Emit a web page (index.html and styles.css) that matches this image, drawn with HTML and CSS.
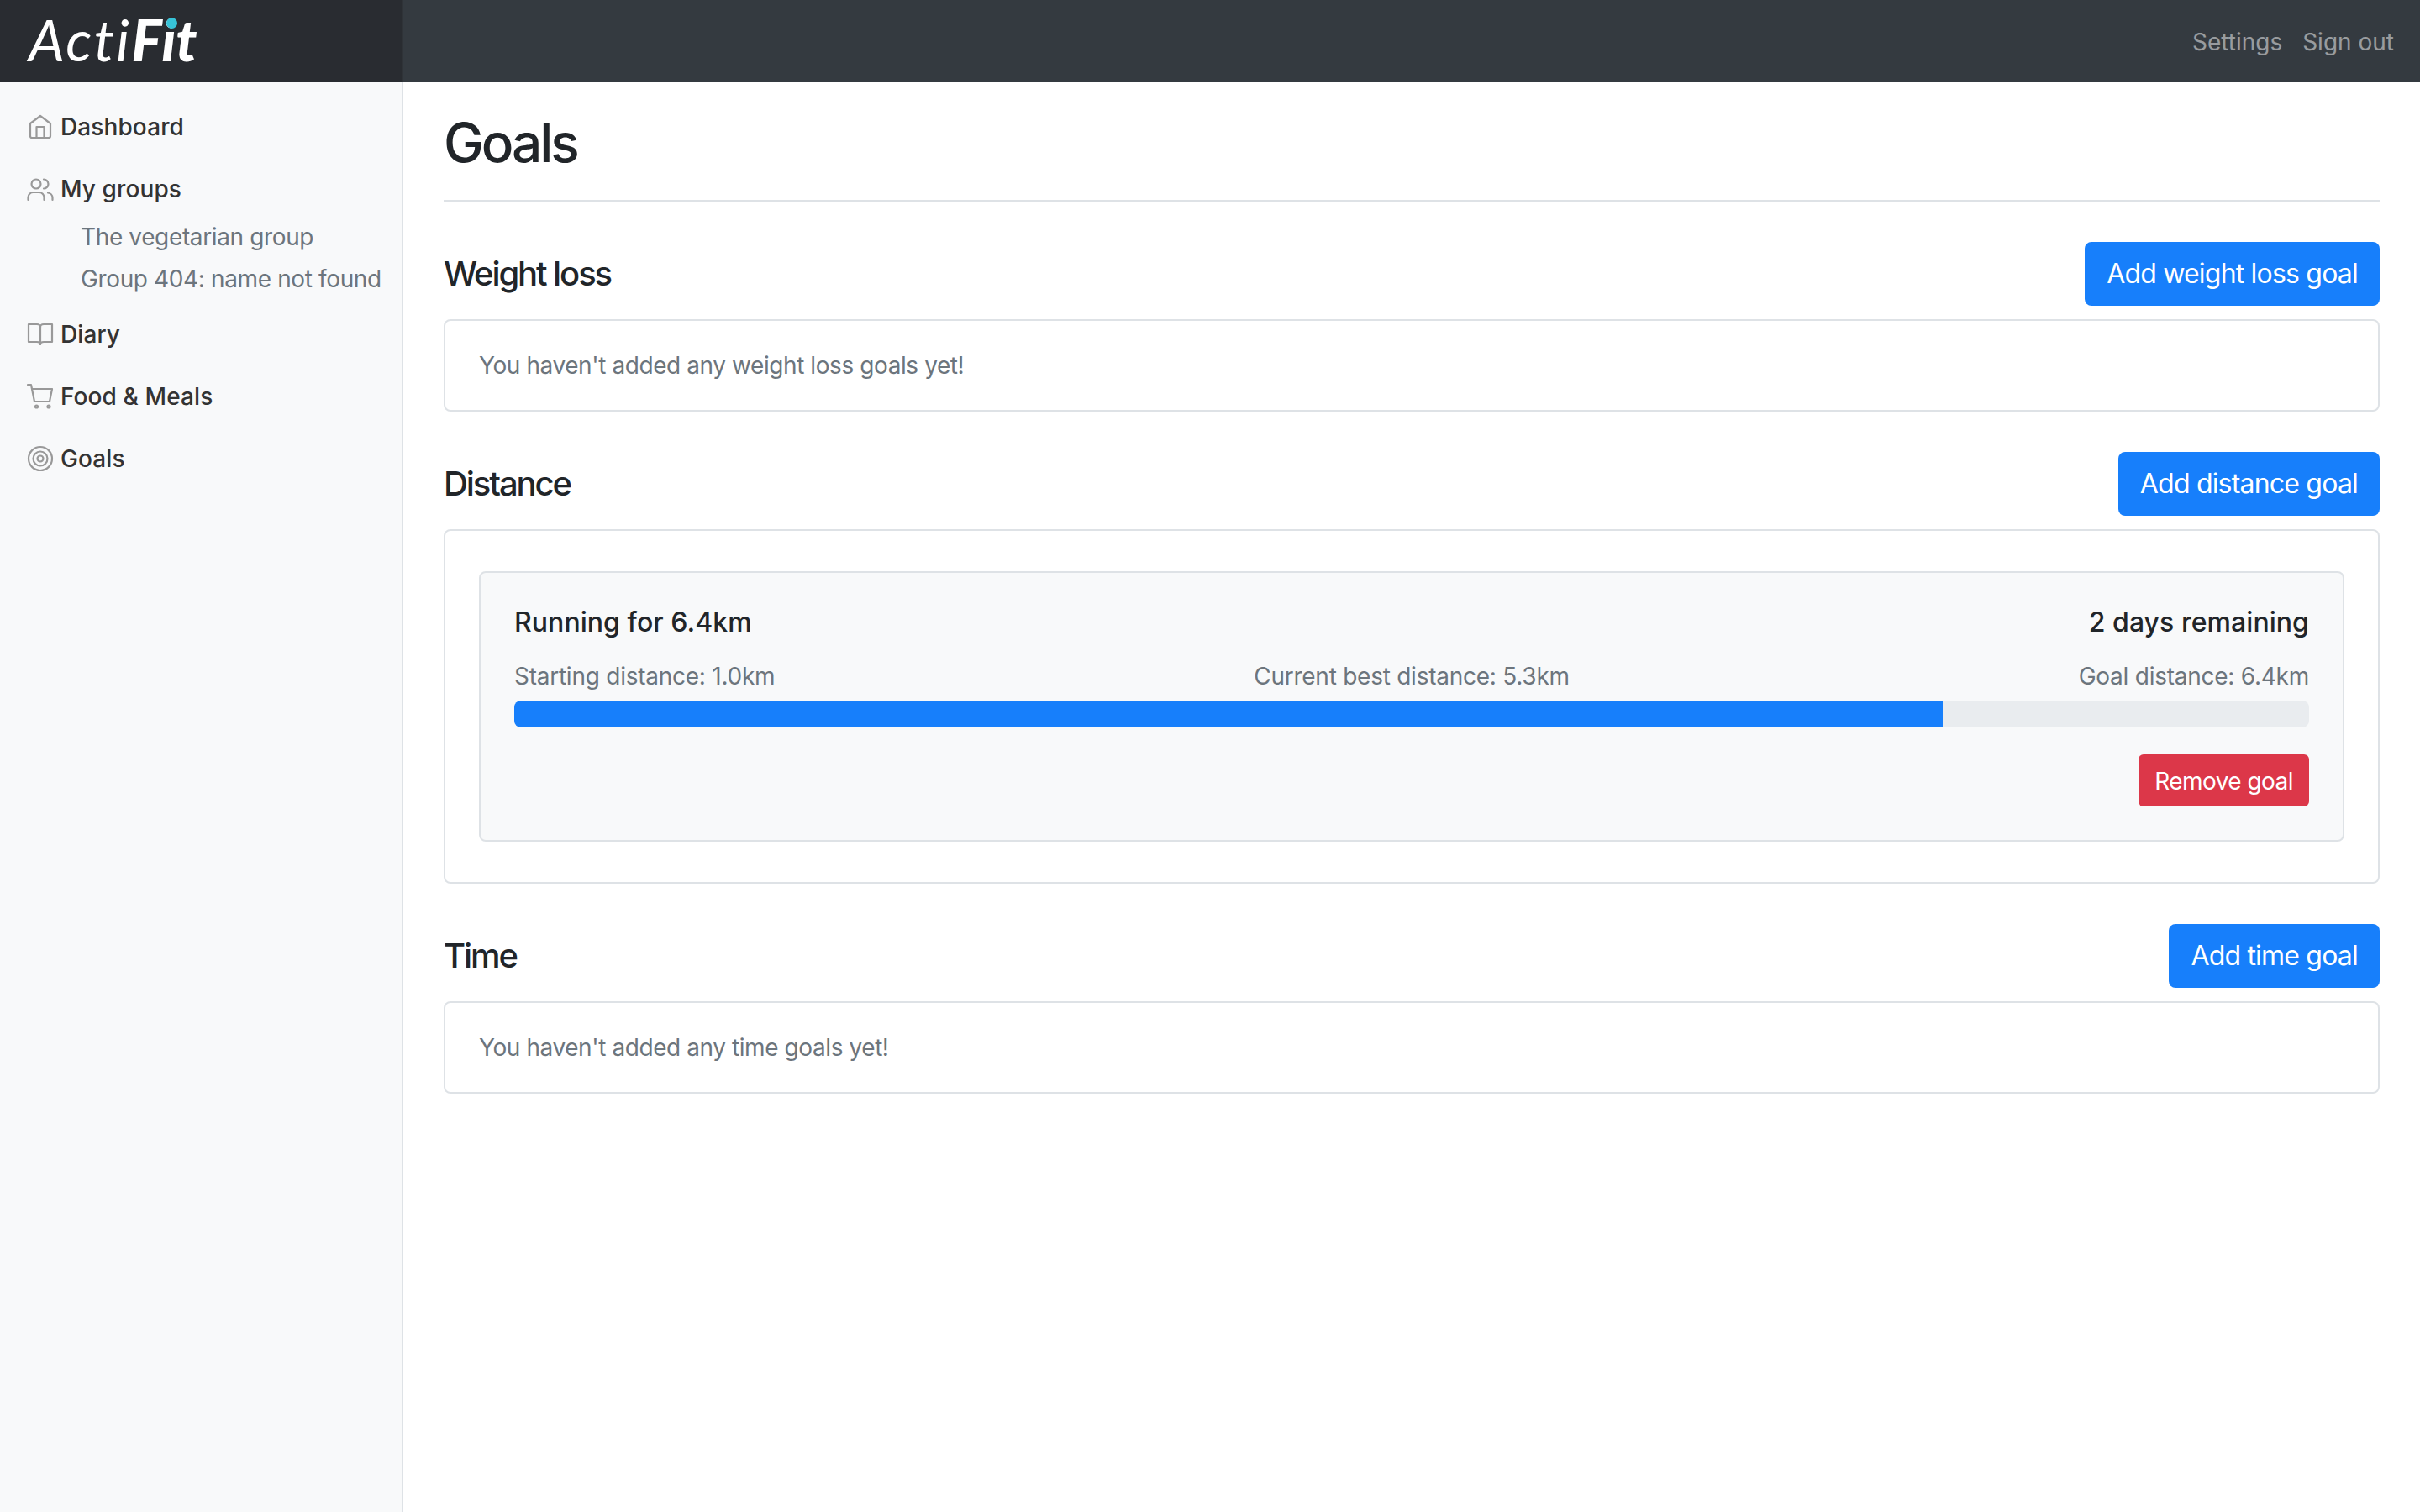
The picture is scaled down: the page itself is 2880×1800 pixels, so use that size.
FILE: index.html
```html
<!DOCTYPE html>
<html lang="en">
<head>
  <meta charset="UTF-8" />
  <title>ActiFit - Goals</title>
  <link rel="stylesheet" href="styles.css">
</head>
<body>
  <header class="topbar">
    <a class="brand" href="#">Acti<b>F<span class="brand-i">i</span>t</b></a>
    <nav class="topnav">
      <a href="#">Settings</a>
      <a href="#">Sign out</a>
    </nav>
  </header>

  <div class="layout">
    <aside class="sidebar">
      <a class="side-link" href="#">
        <svg class="icon" viewBox="0 0 32 32"><path d="M4 12 16 3l12 9v15a2 2 0 0 1-2 2H6a2 2 0 0 1-2-2z"/><path d="M11.5 29V16h9v13"/></svg>
        Dashboard
      </a>
      <a class="side-link" href="#">
        <svg class="icon" viewBox="0 0 32 32"><circle cx="11" cy="10" r="5.5"/><path d="M1.5 29v-3a6 6 0 0 1 6-6h7a6 6 0 0 1 6 6v3"/><path d="M20 4.5a5.5 5.5 0 0 1 0 11"/><path d="M25 20.5a6 6 0 0 1 5.5 6V29"/></svg>
        My groups
      </a>
      <div class="side-sub">
        <a href="#">The vegetarian group</a>
        <a href="#">Group 404: name not found</a>
      </div>
      <a class="side-link" href="#">
        <svg class="icon" viewBox="0 0 32 32"><path d="M2 4h10c2.500 0 4 1.500 4 3.500C16 5.500 17.500 4 20 4h10v21H20c-2 0-4 1-4 3 0-2-2-3-4-3H2z"/><path d="M16 7.500V28"/></svg>
        Diary
      </a>
      <a class="side-link" href="#">
        <svg class="icon" viewBox="0 0 32 32"><path d="M1 2h4l4 20h18l3-15H6"/><circle cx="11.500" cy="28" r="1.500"/><circle cx="26" cy="28" r="1.500"/></svg>
        Food &amp; Meals
      </a>
      <a class="side-link" href="#">
        <svg class="icon" viewBox="0 0 32 32"><circle cx="16" cy="16" r="14"/><circle cx="16" cy="16" r="8.500"/><circle cx="16" cy="16" r="3.500"/></svg>
        Goals
      </a>
    </aside>

    <main class="content">
      <h1 class="page-title">Goals</h1>

      <section class="goal-section">
        <div class="section-head">
          <h2>Weight loss</h2>
          <button class="btn btn-add">Add weight loss goal</button>
        </div>
        <div class="goal-box">
          <p class="empty">You haven't added any weight loss goals yet!</p>
        </div>
      </section>

      <section class="goal-section">
        <div class="section-head">
          <h2>Distance</h2>
          <button class="btn btn-add">Add distance goal</button>
        </div>
        <div class="goal-box goal-box-full">
          <div class="goal-card">
            <div class="goal-top">
              <span>Running for 6.4km</span>
              <span>2 days remaining</span>
            </div>
            <div class="goal-labels">
              <span>Starting distance: 1.0km</span>
              <span>Current best distance: 5.3km</span>
              <span class="label-end">Goal distance: 6.4km</span>
            </div>
            <div class="progress"><div class="progress-bar" style="width: 79.6%"></div></div>
            <div class="goal-actions">
              <button class="btn btn-remove">Remove goal</button>
            </div>
          </div>
        </div>
      </section>

      <section class="goal-section">
        <div class="section-head">
          <h2>Time</h2>
          <button class="btn btn-add">Add time goal</button>
        </div>
        <div class="goal-box">
          <p class="empty">You haven't added any time goals yet!</p>
        </div>
      </section>
    </main>
  </div>
</body>
</html>
```

FILE: styles.css
```css
* { box-sizing: border-box; }
body { margin: 0; height: 100vh; display: flex; flex-direction: column; font-family: Inter, "Liberation Sans", sans-serif; font-size: 32px; line-height: 1.5; color: #212529; background: #fff; }
a { text-decoration: none; color: inherit; }

.topbar { display: flex; align-items: center; justify-content: space-between; height: 98px; background: #343a40; flex: none; }
.brand { display: block; width: 480px; height: 98px; padding-left: 34px; background: #292c31; border-right: 2px solid #2f3338; color: #fff; font-family: Lato, sans-serif; font-style: italic; font-weight: 400; font-size: 68px; line-height: 94px; letter-spacing: 2.5px; }
.brand b { font-weight: 900; letter-spacing: 0; }
.brand-i { position: relative; }
.brand-i::after { content: ""; position: absolute; left: 6px; top: 15px; width: 13px; height: 13px; border-radius: 50%; background: #37c3d8; }
.topnav { display: flex; gap: 24px; padding: 1px 31px 0 0; font-size: 28px; color: rgba(255, 255, 255, .5); }

.layout { display: flex; flex: 1; }
.sidebar { width: 480px; flex: none; padding-top: 16px; background: #f8f9fa; border-right: 2px solid #dee2e6; }
.side-link { display: flex; align-items: center; gap: 8px; height: 74px; padding-left: 32px; font-size: 28px; font-weight: 500; letter-spacing: .1px; color: #333; }
.icon { width: 32px; height: 32px; fill: none; stroke: #999; stroke-width: 2.2; stroke-linecap: round; stroke-linejoin: round; flex: none; }
.side-sub { display: flex; flex-direction: column; margin-top: -5px; margin-bottom: 4px; padding-left: 96px; font-size: 28px; line-height: 50px; letter-spacing: -.37px; color: #6c757d; }
.side-sub a { white-space: nowrap; }

.content { flex: 1; padding: 0 48px; }
.page-title { margin: 0 0 48px; padding: 34px 0 29px; font-size: 64px; font-weight: 500; line-height: 1.2; letter-spacing: -3.1px; border-bottom: 2px solid #dee2e6; }

.goal-section { margin-bottom: 48px; }
.section-head { display: flex; align-items: center; justify-content: space-between; margin-bottom: 16px; }
.section-head h2 { margin: 0; font-size: 40px; font-weight: 500; line-height: 1.2; letter-spacing: -2.1px; }

.btn { border: 2px solid transparent; color: #fff; font-family: inherit; font-weight: 400; }
.btn-add { height: 76px; padding: 1px 24px 0; background: #177ffb; border-radius: 8px; font-size: 32px; line-height: 48px; letter-spacing: -.8px; }
.btn-remove { height: 62px; padding: 2px 17px 0; background: #dc3749; border-radius: 6px; font-size: 28px; line-height: 42px; letter-spacing: -.55px; }

.goal-box { padding: 32px 40px; border: 2px solid #dee2e6; border-radius: 8px; }
.goal-box-full { padding: 48px 40px; }
.empty { margin: 0; font-size: 28px; line-height: 42px; letter-spacing: -.42px; color: #6c757d; }

.goal-card { padding: 35px 40px 40px; background: #f8f9fa; border: 2px solid #dee2e6; border-radius: 8px; }
.goal-top { display: flex; justify-content: space-between; font-size: 32px; font-weight: 500; line-height: 48px; letter-spacing: .05px; }
.goal-labels { display: grid; grid-template-columns: 1fr auto 1fr; margin-top: 19px; font-size: 28px; line-height: 42px; letter-spacing: -.25px; color: #6c757d; }
.label-end { text-align: right; }
.progress { height: 32px; background: #e9ecef; border-radius: 8px; overflow: hidden; margin-top: 8px; }
.progress-bar { height: 100%; background: #177ffb; }
.goal-actions { display: flex; justify-content: flex-end; margin-top: 32px; }
```
